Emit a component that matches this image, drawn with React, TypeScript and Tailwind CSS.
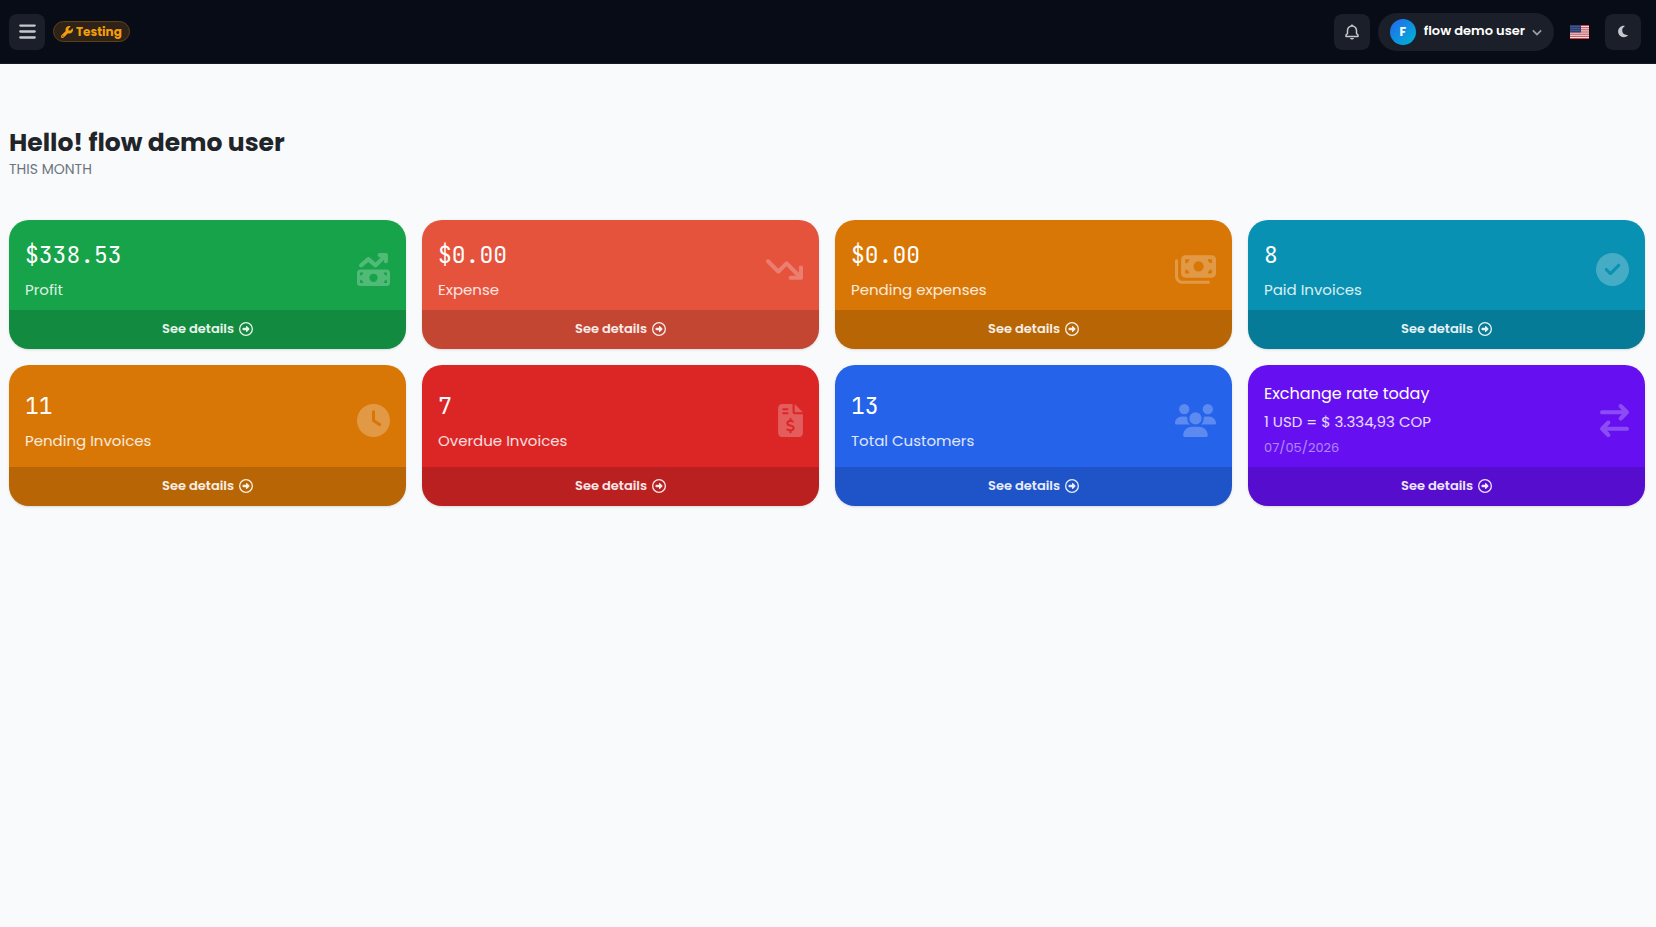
import clsx from "clsx";
import type { IconType } from "react-icons";
import { BiBell, BiChevronDown } from "react-icons/bi";
import {
  FaArrowRightArrowLeft,
  FaArrowTrendDown,
  FaBars,
  FaCircleCheck,
  FaClock,
  FaFileInvoiceDollar,
  FaMoneyBills,
  FaMoneyBillTrendUp,
  FaMoon,
  FaRegCircleRight,
  FaUsers,
  FaWrench,
} from "react-icons/fa6";

type Stat = {
  id: string;
  value: string;
  label: string;
  color: string;
  icon: IconType;
  iconWidth: string;
};

const stats: Stat[] = [
  { id: "profit", value: "$338.53", label: "Profit", color: "bg-[#16a34a]", icon: FaMoneyBillTrendUp, iconWidth: "w-[33px]" },
  { id: "expense", value: "$0.00", label: "Expense", color: "bg-[#e5533d]", icon: FaArrowTrendDown, iconWidth: "w-[37px]" },
  { id: "pending-expenses", value: "$0.00", label: "Pending expenses", color: "bg-[#d97706]", icon: FaMoneyBills, iconWidth: "w-[41px]" },
  { id: "paid", value: "8", label: "Paid Invoices", color: "bg-[#0891b2]", icon: FaCircleCheck, iconWidth: "w-[33px]" },
  { id: "pending", value: "11", label: "Pending Invoices", color: "bg-[#d97706]", icon: FaClock, iconWidth: "w-[33px]" },
  { id: "overdue", value: "7", label: "Overdue Invoices", color: "bg-[#dc2626]", icon: FaFileInvoiceDollar, iconWidth: "w-[25px]" },
  { id: "customers", value: "13", label: "Total Customers", color: "bg-[#2563eb]", icon: FaUsers, iconWidth: "w-[41px]" },
];

const stripes = [0, 2, 4, 6, 8, 10, 12];
const stars = [1, 3, 5, 7, 9];

function UsFlag() {
  return (
    <svg viewBox="0 0 19 14" className="h-3.5 w-[19px]" aria-hidden="true">
      <rect width="19" height="14" fill="#f3eef1" />
      {stripes.map((row) => (
        <rect key={row} y={(row * 14) / 13} width="19" height={14 / 13} fill="#c8414b" />
      ))}
      <rect width="11" height="7.5" fill="#2b3f73" />
      {[1, 3, 5].map((y) =>
        stars.map((x) => <circle key={`${x}-${y}`} cx={x} cy={y + 0.4} r="0.4" fill="#b9c2d9" />)
      )}
    </svg>
  );
}

function Header() {
  const iconButton = "flex size-9 items-center justify-center rounded-lg bg-[#1b1f29] text-[#c5c7cb]";

  return (
    <header className="flex h-16 items-center justify-between border-b border-[#161a25] bg-[#080c17] pr-[15px] pl-[9px]">
      <div className="flex items-center gap-2">
        <button type="button" aria-label="Toggle menu" className={iconButton}>
          <FaBars className="h-[19px] w-[17px]" />
        </button>
        <span className="flex h-[21px] items-center gap-[3px] rounded-full border border-[#5f4214] bg-[#2f2319] px-[7px] text-[12px] font-bold text-[#f59e0b]">
          <FaWrench className="size-3" />
          Testing
        </span>
      </div>
      <div className="flex items-center">
        <button type="button" aria-label="Notifications" className={iconButton}>
          <BiBell className="size-[18px]" />
        </button>
        <button
          type="button"
          className="ml-2 flex h-[38px] items-center rounded-full bg-[#1b1f29] pr-[7px] pl-3 text-[13px] font-semibold text-white"
        >
          <span className="flex size-[26px] items-center justify-center rounded-full bg-linear-to-br from-[#2563eb] to-[#06b6d4] text-[12px] font-bold">
            F
          </span>
          <span className="ml-2 pb-0.5">flow demo user</span>
          <BiChevronDown className="ml-0.5 size-5 text-[#9b9da2]" />
        </button>
        <button type="button" aria-label="Language: English" className="px-4">
          <UsFlag />
        </button>
        <button type="button" aria-label="Dark mode" className={iconButton}>
          <FaMoon className="h-[13px] w-2.5" />
        </button>
      </div>
    </header>
  );
}

type CardProps = {
  color: string;
  icon: IconType;
  iconWidth: string;
  children: React.ReactNode;
};

function Card({ color, icon: Icon, iconWidth, children }: CardProps) {
  return (
    <article className={clsx("flex flex-col overflow-hidden rounded-[20px] text-white shadow-sm", color)}>
      <div className="flex flex-1 items-center justify-between px-4 pt-4 pb-2">
        <div>{children}</div>
        <Icon className={clsx("h-[33px] shrink-0 opacity-25", iconWidth)} />
      </div>
      <a
        href="#details"
        className="flex h-[39px] items-center justify-center gap-[5px] bg-black/15 pb-0.5 text-[13px] font-semibold text-white/90"
      >
        See details
        <FaRegCircleRight className="size-3.5" />
      </a>
    </article>
  );
}

export default function App() {
  return (
    <div className="min-h-screen bg-[#f9fafc] font-['Poppins','Inter',sans-serif] text-[#212529]">
      <Header />
      <main className="pt-[63px] pr-[11px] pb-8 pl-[9px]">
        <h1 className="text-[25px] leading-8 font-bold">Hello! flow demo user</h1>
        <p className="text-[14px] leading-5 text-[#6c757d] uppercase">This month</p>
        <section className="mt-[41px] grid grid-cols-1 gap-4 sm:grid-cols-2 lg:grid-cols-4">
          {stats.map((stat) => (
            <Card key={stat.id} color={stat.color} icon={stat.icon} iconWidth={stat.iconWidth}>
              <p className="font-['JetBrains_Mono','DejaVu_Sans_Mono',monospace] text-[23px] leading-[38px]">{stat.value}</p>
              <p className="pt-1 text-[15px] leading-6 text-white/85">{stat.label}</p>
            </Card>
          ))}
          <Card color="bg-[#6610f2]" icon={FaArrowRightArrowLeft} iconWidth="w-[29px]">
            <p className="text-[16px] leading-[26px]">Exchange rate today</p>
            <p className="text-[15px] leading-[30px] text-white/85">1 USD = $ 3.334,93 COP</p>
            <p className="text-[13px] leading-[22px] text-white/50">07/05/2026</p>
          </Card>
        </section>
      </main>
    </div>
  );
}
